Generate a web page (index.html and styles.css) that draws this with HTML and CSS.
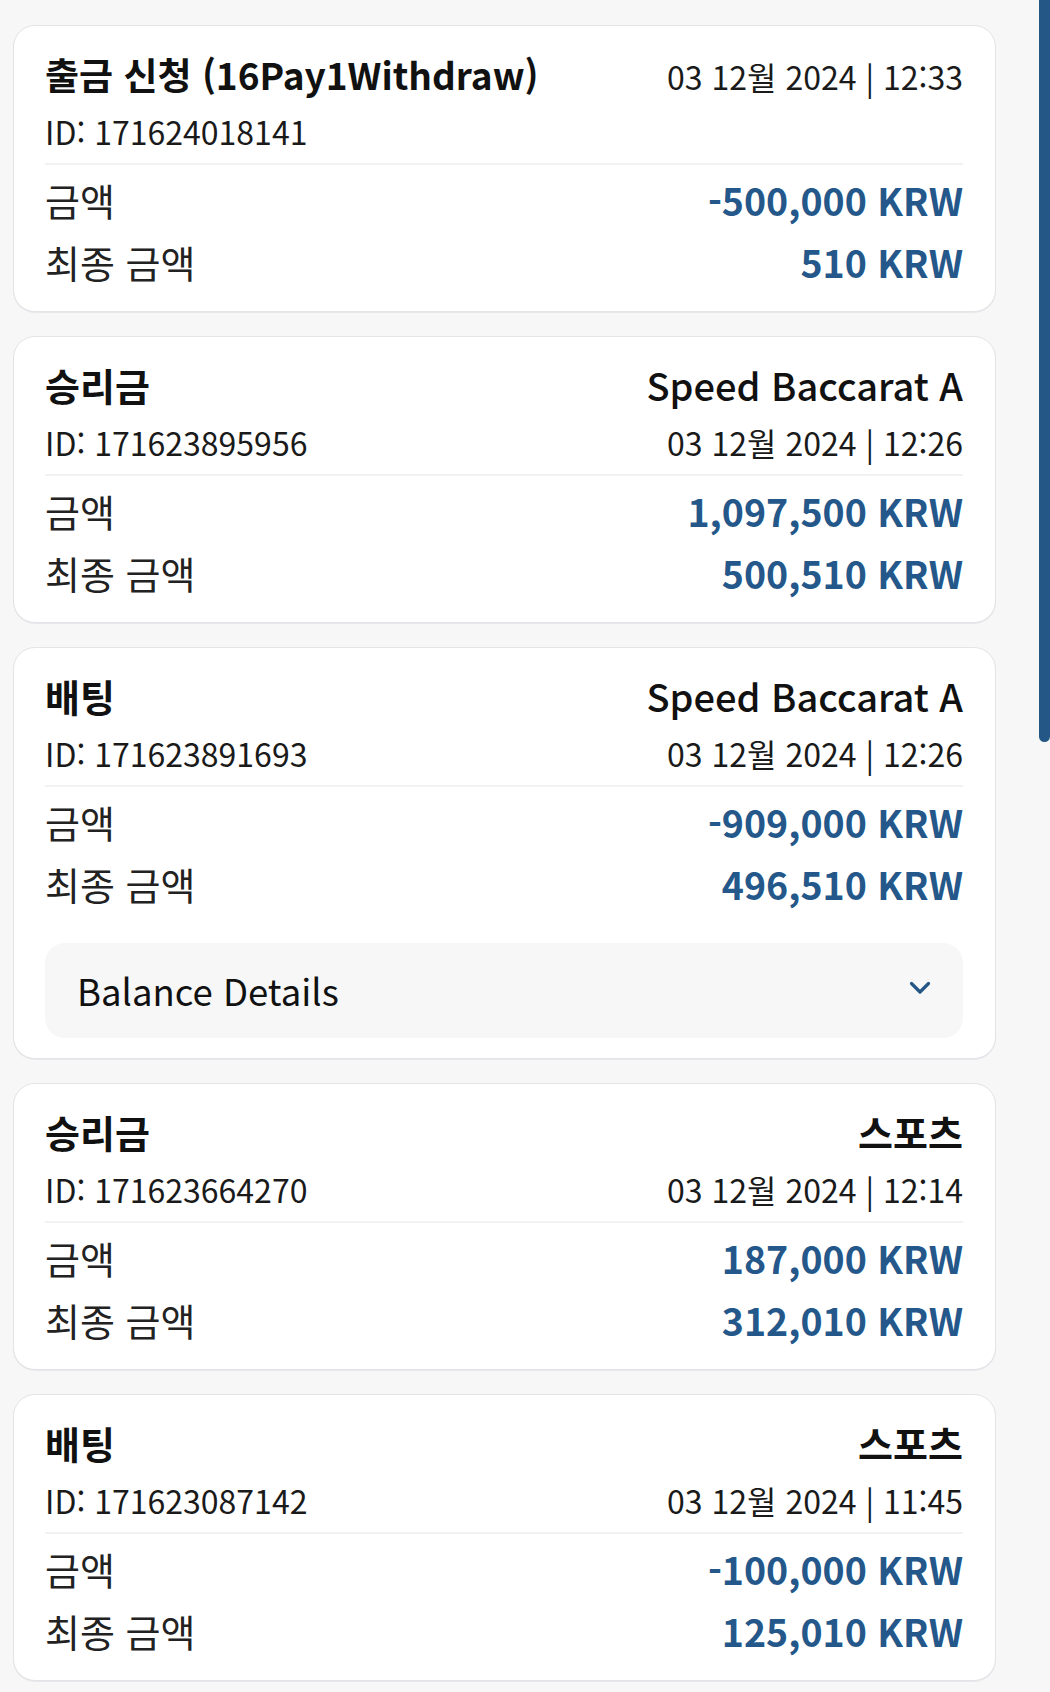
FILE: index.html
```html
<!DOCTYPE html>
<html lang="ko">
<head>
<meta charset="utf-8">
<link rel="stylesheet" href="styles.css">
</head>
<body>
<div class="list">
  <div class="card">
    <div class="head-row"><span class="title title-mixed">출금 신청 (16Pay1Withdraw)</span><span class="date">03 12월 2024 | 12:33</span></div>
    <div class="sub-row"><span class="id">ID: 171624018141</span></div>
    <div class="rows">
      <div class="row"><span class="label">금액</span><span class="amount">-500,000 KRW</span></div>
      <div class="row"><span class="label">최종 금액</span><span class="amount">510 KRW</span></div>
    </div>
  </div>
  <div class="card">
    <div class="head-row"><span class="title">승리금</span><span class="game">Speed Baccarat A</span></div>
    <div class="sub-row"><span class="id">ID: 171623895956</span><span class="date">03 12월 2024 | 12:26</span></div>
    <div class="rows">
      <div class="row"><span class="label">금액</span><span class="amount">1,097,500 KRW</span></div>
      <div class="row"><span class="label">최종 금액</span><span class="amount">500,510 KRW</span></div>
    </div>
  </div>
  <div class="card card-ext">
    <div class="head-row"><span class="title">배팅</span><span class="game">Speed Baccarat A</span></div>
    <div class="sub-row"><span class="id">ID: 171623891693</span><span class="date">03 12월 2024 | 12:26</span></div>
    <div class="rows">
      <div class="row"><span class="label">금액</span><span class="amount">-909,000 KRW</span></div>
      <div class="row"><span class="label">최종 금액</span><span class="amount">496,510 KRW</span></div>
    </div>
    <div class="details">
      <span class="details-text">Balance Details</span>
      <svg class="chev" width="22" height="14" viewBox="0 0 22 14"><path d="M2.5 2.5 L11 11 L19.5 2.5" fill="none" stroke="#245786" stroke-width="3.2" stroke-linecap="round" stroke-linejoin="round"/></svg>
    </div>
  </div>
  <div class="card">
    <div class="head-row"><span class="title">승리금</span><span class="title">스포츠</span></div>
    <div class="sub-row"><span class="id">ID: 171623664270</span><span class="date">03 12월 2024 | 12:14</span></div>
    <div class="rows">
      <div class="row"><span class="label">금액</span><span class="amount">187,000 KRW</span></div>
      <div class="row"><span class="label">최종 금액</span><span class="amount">312,010 KRW</span></div>
    </div>
  </div>
  <div class="card">
    <div class="head-row"><span class="title">배팅</span><span class="title">스포츠</span></div>
    <div class="sub-row"><span class="id">ID: 171623087142</span><span class="date">03 12월 2024 | 11:45</span></div>
    <div class="rows">
      <div class="row"><span class="label">금액</span><span class="amount">-100,000 KRW</span></div>
      <div class="row"><span class="label">최종 금액</span><span class="amount">125,010 KRW</span></div>
    </div>
  </div>
</div>
<div class="scrollbar"></div>
</body>
</html>
```
FILE: styles.css
```css
html, body {
  margin: 0;
  padding: 0;
  background: #f7f7f7;
}
body {
  font-family: "Noto Sans CJK KR", "Noto Sans", sans-serif;
  color: #151515;
  height: 1692px;
  overflow: hidden;
  position: relative;
}
.list {
  padding: 25px 0 0 13px;
  width: 983px;
  display: flex;
  flex-direction: column;
  gap: 24px;
}
.card {
  background: #fff;
  border: 1px solid #e2e4e7;
  border-radius: 22px;
  padding: 24px 32px 18px 31px;
  box-shadow: 0 1px 0 #e6e8ea;
}
.head-row {
  display: flex;
  justify-content: space-between;
  align-items: baseline;
  height: 48px;
  line-height: 48px;
}
.title {
  font-size: 38px;
  font-weight: 700;
  color: #111;
}
.title-mixed {
  font-size: 37px;
}
.game {
  font-size: 38px;
  font-weight: 500;
  color: #111;
}
.date {
  font-size: 32px;
  color: #1a1a1a;
}
.sub-row {
  display: flex;
  justify-content: space-between;
  margin-top: 11px;
  height: 44px;
  line-height: 44px;
}
.id {
  font-size: 32px;
  color: #1a1a1a;
}
.rows {
  margin-top: 10px;
  border-top: 2px solid #f2f2f2;
  padding-top: 4px;
}
.row {
  display: flex;
  justify-content: space-between;
  align-items: baseline;
  height: 62px;
  line-height: 62px;
}
.label {
  font-size: 38px;
  color: #222;
}
.amount {
  font-size: 37.5px;
  font-weight: 700;
  color: #25588a;
}
.details {
  margin: 28px 0 2px;
  height: 95px;
  background: #f7f7f7;
  border-radius: 20px;
  display: flex;
  align-items: center;
  justify-content: space-between;
  padding: 0 32px 0 32px;
}
.details-text {
  font-size: 36.5px;
  color: #111;
}
.chev {
  display: block;
  margin-top: -6px;
}
.scrollbar {
  position: absolute;
  top: 0;
  right: 0;
  width: 11px;
  height: 742px;
  background: #245786;
  border-radius: 0 0 6px 6px;
}
```
